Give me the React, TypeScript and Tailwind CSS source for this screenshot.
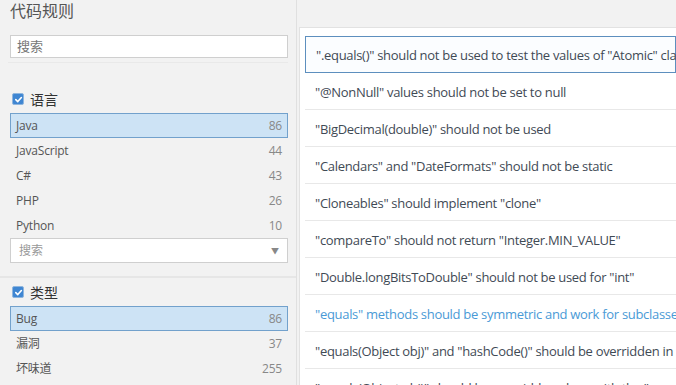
import React from "react";

const FONT = { fontFamily: '"Open Sans", "Noto Sans CJK SC", sans-serif' };

function Check() {
  return (
    <span className="inline-flex h-[12px] w-[12px] items-center justify-center rounded-[2px] border border-[#8fb6de] bg-[#3f86d2]">
      <svg width="9" height="9" viewBox="0 0 10 10">
        <path d="M2 5.2 L4.2 7.3 L8.2 2.8" fill="none" stroke="#fff" strokeWidth="1.8" strokeLinecap="round" strokeLinejoin="round" />
      </svg>
    </span>
  );
}

function Item({ name, count, selected }: { name: string; count: number; selected?: boolean }) {
  return (
    <div
      className={
        "flex h-[25px] items-center justify-between px-[5px] text-[12px] tracking-[-0.2px] " +
        (selected ? "border border-[#72a1cc] bg-[#cde3f5]" : "border border-transparent")
      }
    >
      <span className="text-[#555]">{name}</span>
      <span className="text-[#888]">{count}</span>
    </div>
  );
}

const rules = [
  '".equals()" should not be used to test the values of "Atomic" classes',
  '"@NonNull" values should not be set to null',
  '"BigDecimal(double)" should not be used',
  '"Calendars" and "DateFormats" should not be static',
  '"Cloneables" should implement "clone"',
  '"compareTo" should not return "Integer.MIN_VALUE"',
  '"Double.longBitsToDouble" should not be used for "int"',
  '"equals" methods should be symmetric and work for subclasses',
  '"equals(Object obj)" and "hashCode()" should be overridden in pairs',
  '"equals(Object obj)" should be overridden along with the "compareTo(T obj)" method',
];

export default function App() {
  return (
    <div className="flex h-[385px] w-[676px] overflow-hidden bg-[#f2f2f2]" style={FONT}>
      <aside className="flex w-[297px] shrink-0 flex-col border-r border-[#e0e0e0] pl-[10px] pr-[8px]">
        <div className="h-[35px] pl-0 text-[16px] leading-[22px] text-[#555]">代码规则</div>
        <div className="flex h-[23px] items-center border border-[#cfcfcf] bg-white px-[6px] text-[13px] text-[#777]">
          搜索
        </div>
        <div className="-ml-[2px] mt-[4px] h-0 border-t border-[#e9e9e9]" />
        <div className="mt-[22px] flex h-[28px] items-center gap-[6px] pl-[2px] text-[14px] text-[#333]">
          <Check />
          <span>语言</span>
        </div>
        <Item name="Java" count={86} selected />
        <Item name="JavaScript" count={44} />
        <Item name="C#" count={43} />
        <Item name="PHP" count={26} />
        <Item name="Python" count={10} />
        <div className="flex h-[25px] items-center justify-between border border-[#cfcfcf] bg-white pl-[8px] pr-[8px] text-[12px] text-[#999]">
          <span>搜索</span>
          <span className="text-[8px] text-[#888]">▼</span>
        </div>
        <div className="-ml-[10px] -mr-[8px] mt-[13px] border-t-[2px] border-[#e6e6e6]" />
        <div className="flex h-[28px] items-center gap-[6px] pl-[2px] text-[14px] text-[#333]">
          <Check />
          <span>类型</span>
        </div>
        <Item name="Bug" count={86} selected />
        <Item name="漏洞" count={37} />
        <Item name="坏味道" count={255} />
      </aside>
      <div className="w-[2px] shrink-0" />
      <main className="flex min-w-0 flex-1 flex-col">
        <div className="h-[27px] shrink-0" />
        <div className="flex-1 overflow-hidden border-l border-t border-[#e2e2e2] bg-white pl-[5px] pt-[8px]">
          {rules.map((r, i) => (
            <div
              key={i}
              className={
                "flex h-[37px] items-center whitespace-nowrap pl-[10px] pt-[3px] text-[13px] tracking-[-0.3px] " +
                (i === 0
                  ? "border border-[#5d8fbe] bg-[#fbfdff] text-[#3f4a55]"
                  : "border-b border-[#e8e8e8] " + (i === 7 ? "text-[#4a9ad6]" : "text-[#3f4a55]"))
              }
            >
              {r}
            </div>
          ))}
        </div>
      </main>
    </div>
  );
}
